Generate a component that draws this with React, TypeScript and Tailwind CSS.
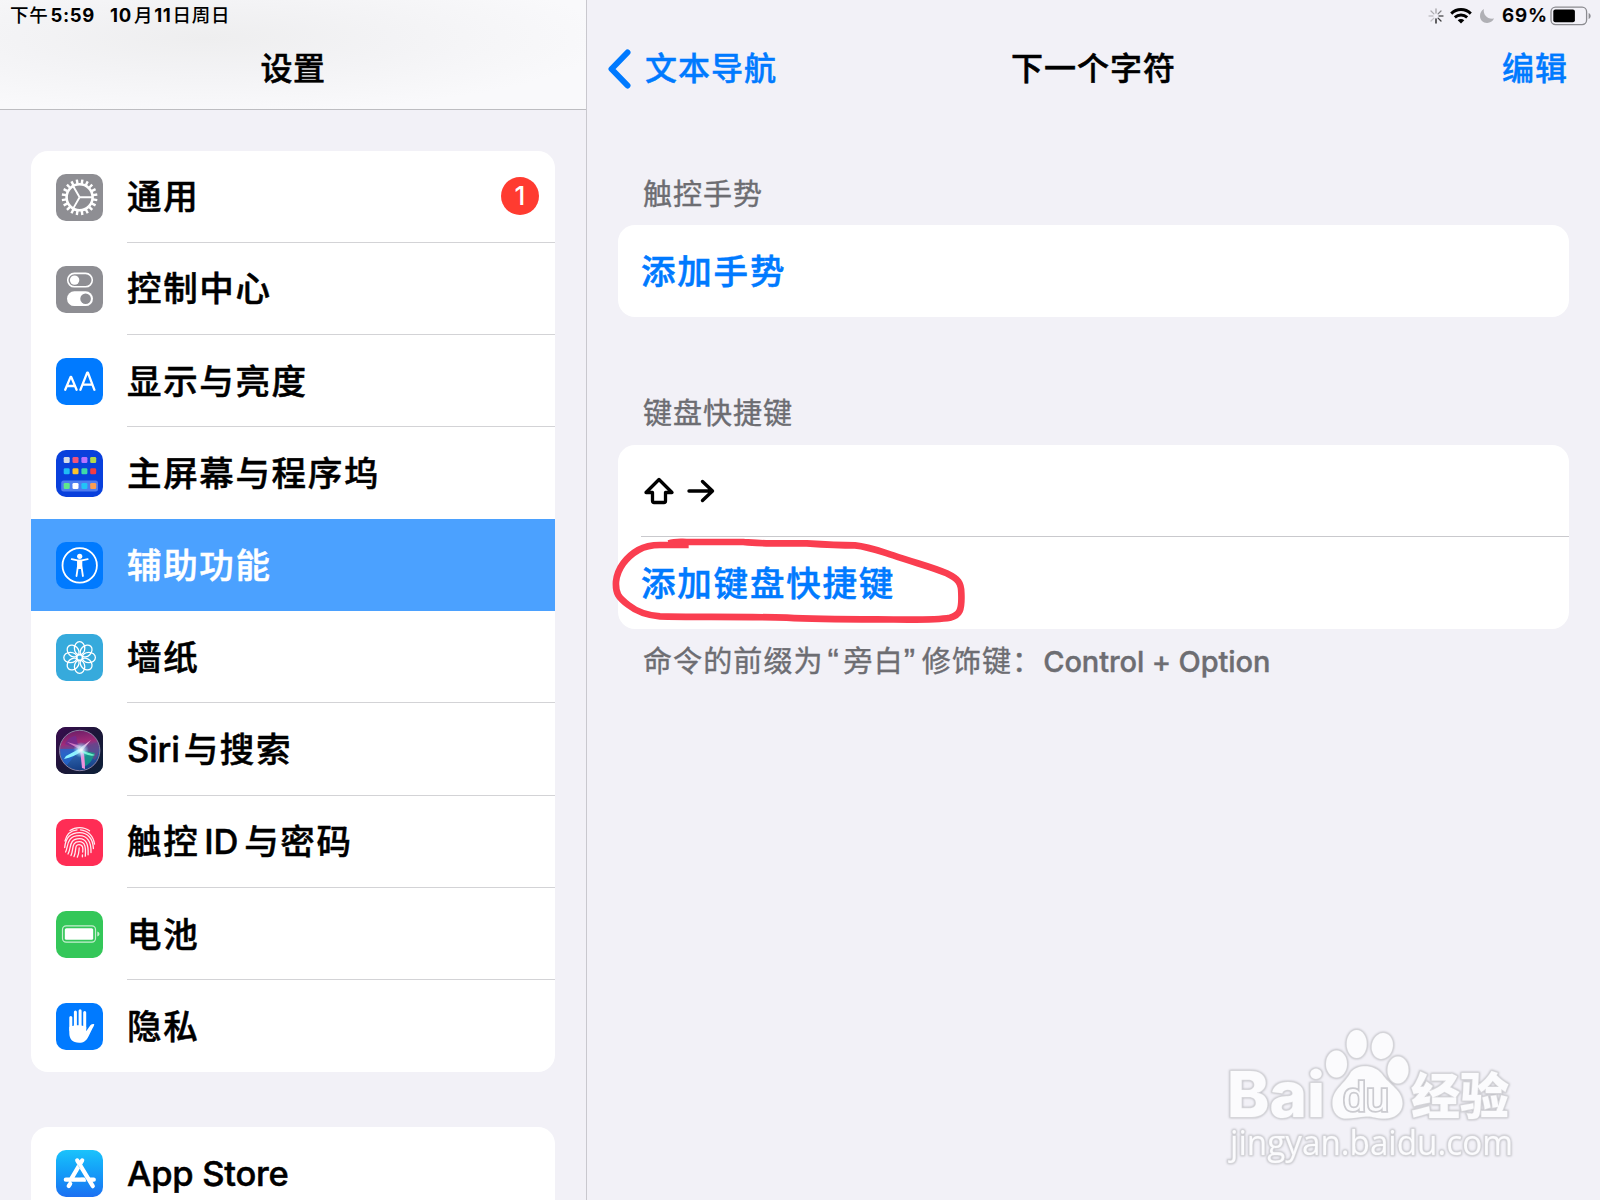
import type { ReactNode } from "react";

const GEAR_TEETH = Array.from({ length: 20 }, (_, i) => i * 18 + 9);
const PETALS = [0, 45, 90, 135, 180, 225, 270, 315];

const GRID_DOTS = [
  { x: 10.7, y: 10, color: "#d5dbe6" },
  { x: 19.5, y: 10, color: "#f2557a" },
  { x: 28.4, y: 10, color: "#b872ff" },
  { x: 37.2, y: 10, color: "#b3d94c" },
  { x: 10.7, y: 21.3, color: "#1fbcf5" },
  { x: 19.5, y: 21.3, color: "#fdc22b" },
  { x: 28.4, y: 21.3, color: "#3fd8a8" },
  { x: 37.2, y: 21.3, color: "#f23c43" },
  { x: 10.7, y: 36, color: "#5fe88a" },
  { x: 19.5, y: 36, color: "#ffffff" },
  { x: 28.4, y: 36, color: "#22c3f7" },
  { x: 37.2, y: 36, color: "#f99d52" },
];

function AppIcon({ className, children }: { className: string; children: ReactNode }) {
  return (
    <svg viewBox="0 0 47 47" className={`mt-px size-[47px] shrink-0 rounded-[10px] ${className}`}>
      {children}
    </svg>
  );
}

function GearIcon() {
  return (
    <AppIcon className="bg-[#8e8e93]">
      <g stroke="#fff" fill="none" transform="translate(23.6 23.3)">
        <circle r="13" strokeWidth="2.6" />
        {GEAR_TEETH.map((a) => (
          <path key={a} d="M13.5 0H17.9" strokeWidth="2.4" transform={`rotate(${a})`} />
        ))}
        <path d="M0 0H13M0 0L-6.5 -11.3M0 0L-6.5 11.3" strokeWidth="1.9" />
      </g>
    </AppIcon>
  );
}

function TogglesIcon() {
  return (
    <AppIcon className="bg-[#8e8e93]">
      <rect x="11.7" y="7.4" width="24.6" height="13.4" rx="6.7" fill="none" stroke="#fff" strokeWidth="1.6" />
      <circle cx="18.6" cy="14.1" r="4.7" fill="#fff" />
      <rect x="11" y="25.3" width="26" height="14.8" rx="7.4" fill="#fff" />
      <circle cx="29.6" cy="32.7" r="5.3" fill="#8e8e93" />
    </AppIcon>
  );
}

function DisplayIcon() {
  return (
    <AppIcon className="bg-[#007aff]">
      <g fill="none" stroke="#fff" strokeWidth="2.3" strokeLinecap="round" strokeLinejoin="round">
        <path d="M9.2 31.8L14.6 18.9H15.2L20.6 31.8M11.1 28H18.7" />
        <path d="M24.4 31.8L31.2 14.7H31.9L38.4 31.8M26.6 26.6H36.4" />
      </g>
    </AppIcon>
  );
}

function HomeScreenIcon() {
  return (
    <AppIcon className="bg-[#0940dc]">
      <rect x="5.2" y="30.6" width="36.8" height="10.8" rx="2.5" fill="#4d7cf0" />
      {GRID_DOTS.map((d) => (
        <rect key={`${d.x}-${d.y}`} x={d.x - 3} y={d.y - 3} width="6" height="6" rx="1.3" fill={d.color} />
      ))}
    </AppIcon>
  );
}

function AccessibilityIcon() {
  return (
    <AppIcon className="bg-[#007aff]">
      <circle cx="23.7" cy="23.4" r="17.2" fill="none" stroke="#fff" strokeWidth="1.8" />
      <circle cx="23.7" cy="14.3" r="2.6" fill="#fff" />
      <path
        d="M15.7 17.2L21.5 18.4H25.9L31.7 17.2M22 18.8V24L20.5 34M25.4 18.8V24L26.9 34"
        fill="none"
        stroke="#fff"
        strokeWidth="1.8"
        strokeLinecap="round"
        strokeLinejoin="round"
      />
      <path d="M21.5 18H25.9V24.5L25.3 27H22.1L21.5 24.5Z" fill="#fff" />
    </AppIcon>
  );
}

function WallpaperIcon() {
  return (
    <AppIcon className="bg-[#36aadc]">
      <g fill="none" stroke="#fff" strokeWidth="1.3" transform="translate(23.6 23.5)">
        {PETALS.map((a) => (
          <ellipse key={a} cy="-9.2" rx="5.2" ry="6.6" transform={`rotate(${a})`} />
        ))}
        <circle r="3" />
      </g>
    </AppIcon>
  );
}

function SiriIcon() {
  return (
    <AppIcon className="bg-[#1d1536]">
      <defs>
        <linearGradient id="siriBg" x1="0" y1="0" x2="1" y2="1">
          <stop offset="0" stopColor="#3a0c50" />
          <stop offset="0.5" stopColor="#1c1638" />
          <stop offset="1" stopColor="#0b2138" />
        </linearGradient>
        <linearGradient id="siriOrb" x1="0.4" y1="0" x2="0.55" y2="1">
          <stop offset="0" stopColor="#6d1f68" />
          <stop offset="0.3" stopColor="#a02a78" />
          <stop offset="0.55" stopColor="#2f66b0" />
          <stop offset="1" stopColor="#133c82" />
        </linearGradient>
        <radialGradient id="siriGlow">
          <stop offset="0" stopColor="#fff" />
          <stop offset="0.4" stopColor="#c8f4ff" stopOpacity="0.7" />
          <stop offset="1" stopColor="#7ad8ff" stopOpacity="0" />
        </radialGradient>
      </defs>
      <rect width="47" height="47" fill="url(#siriBg)" />
      <circle cx="23.7" cy="23.5" r="20.2" fill="url(#siriOrb)" />
      <path d="M24 22L4 22Q5 35 11 38Z" fill="#2465d0" opacity="0.75" />
      <path d="M24 22L42 15Q45 25 39 33Z" fill="#6a4488" opacity="0.75" />
      <path d="M24 23L39 26Q35 38 27 40Z" fill="#10a984" opacity="0.7" />
      <path d="M23 22L9 17Q13 9 20 9Z" fill="#702c91" opacity="0.8" />
      <path d="M23 22L10 29L8 32Q18 30 26 24Z" fill="#8df3ff" />
      <path d="M24 22L26 41L29 42Q29 30 27 22Z" fill="#ed91dc" />
      <path d="M24 21L35 13L25 25Z" fill="#ffc2e7" opacity="0.85" />
      <path d="M23 22L11 15L25 19Z" fill="#e489ce" opacity="0.8" />
      <path d="M24 23L39 28Q35 30 27 26Z" fill="#6cf5cc" />
      <circle cx="25" cy="23" r="8" fill="url(#siriGlow)" />
      <circle cx="23.7" cy="23.5" r="20.2" fill="none" stroke="#8a82a4" strokeWidth="1" />
    </AppIcon>
  );
}

function TouchIdIcon() {
  return (
    <AppIcon className="bg-[#ff2d55]">
      <g fill="none" stroke="#ffeaf0" strokeWidth="1.3" strokeLinecap="round">
        <path d="M14 11.5C19.5 7.5 28 7.5 33.5 11.8" />
        <path d="M9 22C10.5 15 15.5 11.4 21 10.8M24.5 10.8C32 11.5 37.3 17 38.5 25" />
        <path d="M8.7 28.5C9.5 20 13.5 13.7 23.5 13.7C32 13.7 37 20 37.4 29.5" />
        <path d="M9.6 33C12.5 27.5 10 16.7 23.5 16.7C31.5 16.7 35.3 23 35 33.5" />
        <path d="M12 35C15.5 29 12.5 19.7 23.5 19.7C30.5 19.7 32.6 26 32.1 35.8" />
        <path d="M15 36.6C18 30 15 22.7 23.3 22.7C29.5 22.7 29.9 29 29.3 37.2" />
        <path d="M18 37.6C21 31 18 25.7 23 25.7C27.2 25.7 27.1 29.5 26.7 33" />
        <path d="M21.3 38.1C23.2 34.5 22.8 32 23.2 29" />
        <path d="M26.4 36V37.8" />
      </g>
    </AppIcon>
  );
}

function BatteryIcon() {
  return (
    <AppIcon className="bg-[#34c759]">
      <rect x="6.5" y="14.9" width="33" height="16.2" rx="3.6" fill="none" stroke="#c5efcf" strokeWidth="1.2" />
      <rect x="8.8" y="17.2" width="28.4" height="11.6" rx="1.6" fill="#fff" />
      <path d="M41.3 20.5V25.5C44.2 24.7 44.2 21.3 41.3 20.5Z" fill="#c5efcf" />
    </AppIcon>
  );
}

function PrivacyIcon() {
  return (
    <AppIcon className="bg-[#007aff]">
      <g stroke="#fff" strokeWidth="3" strokeLinecap="round">
        <path d="M14.8 14.4V27M19.4 8.9V26M24.1 7.8V26M28.7 9.6V26" />
      </g>
      <path
        d="M13.3 24C18 21.5 26 21.5 30.2 24L30.2 28.2L33.5 23.4C35.2 21 37 20.6 38.3 21.4C38 22.7 37.2 23.8 36.4 25.4L32.6 33.2C30.5 37.6 27.5 39.8 23.2 39.8C16.5 39.8 13.3 36 13.3 30Z"
        fill="#fff"
      />
    </AppIcon>
  );
}

function AppStoreIcon() {
  return (
    <AppIcon className="bg-linear-to-b from-[#1cc3fb] to-[#1d70f2]">
      <g stroke="#fff" strokeWidth="4.2" strokeLinecap="round" fill="none">
        <path d="M26.2 10.4L15.4 28.6M21.2 10.4L36.8 36.2M9.8 29.7H27.4M34.2 29.7H37.8M14.2 33.8L12.7 36" />
      </g>
      <path d="M21.5 14.5L24 18.6" stroke="#a5dcfb" strokeWidth="0.8" />
      <path d="M24.5 27.7L29 27.7L30.3 31.6L28 31.7" fill="#fff" />
    </AppIcon>
  );
}

type MenuItem = {
  label: ReactNode;
  icon: ReactNode;
  badge?: number;
  selected?: boolean;
  last?: boolean;
};

const menu: MenuItem[] = [
  { label: "通用", icon: <GearIcon />, badge: 1 },
  { label: "控制中心", icon: <TogglesIcon /> },
  { label: "显示与亮度", icon: <DisplayIcon /> },
  { label: "主屏幕与程序坞", icon: <HomeScreenIcon />, last: true },
  { label: "辅助功能", icon: <AccessibilityIcon />, selected: true },
  { label: "墙纸", icon: <WallpaperIcon /> },
  {
    label: (
      <>
        <span className="mr-[4px] tracking-[-0.2px]">Siri</span>与搜索
      </>
    ),
    icon: <SiriIcon />,
  },
  {
    label: (
      <>
        触控<span className="mr-[6px] ml-[5px] tracking-[-0.2px]">ID</span>与密码
      </>
    ),
    icon: <TouchIdIcon />,
  },
  { label: "电池", icon: <BatteryIcon /> },
  { label: "隐私", icon: <PrivacyIcon />, last: true },
];

function MenuRow({ label, icon, badge, selected, last }: MenuItem) {
  return (
    <li className={`flex h-[92.16px] items-center pl-[25px] ${selected ? "bg-[#4ba1ff] text-white" : "text-black"}`}>
      {icon}
      <div
        className={`ml-6 flex h-full flex-1 items-center justify-between border-b-[1.5px] pr-4 ${
          selected || last ? "border-transparent" : "border-[#d3d3d6]"
        }`}
      >
        <span className="pt-[3px] text-[34.5px] leading-none font-medium tracking-[1.65px] [-webkit-text-stroke:0.5px]">
          {label}
        </span>
        {badge && (
          <span className="mb-px flex size-[38px] items-center justify-center rounded-full bg-[#ff3b30] text-[26px] font-medium text-white">
            {badge}
          </span>
        )}
      </div>
    </li>
  );
}

function StatusIcons() {
  return (
    <div className="flex h-[31px] items-center justify-end pr-[8px]">
      <svg viewBox="0 0 16 16" className="size-4" stroke="#111" strokeWidth="1.3" strokeLinecap="round">
        <path d="M8 11V15" />
        <path d="M10.1 10.1L13 13" opacity="0.8" />
        <path d="M11 8H15" opacity="0.65" />
        <path d="M10.1 5.9L13 3" opacity="0.5" />
        <path d="M8 5V1" opacity="0.35" />
        <path d="M5.9 5.9L3 3" opacity="0.3" />
        <path d="M5 8H1" opacity="0.2" />
        <path d="M5.9 10.1L3 13" opacity="0.2" />
      </svg>
      <svg viewBox="0 0 22 16" className="ml-1.5 h-4 w-[22px]" fill="none" stroke="#000" strokeWidth="2.9">
        <path d="M1.2 5.6C6.7 0.2 15.3 0.2 20.8 5.6" />
        <path d="M4.8 9.4C8.4 6.1 13.6 6.1 17.2 9.4" />
        <path d="M11 15.6L7.7 12.3C9.6 10.7 12.4 10.7 14.3 12.3Z" fill="#000" stroke="none" />
      </svg>
      <svg viewBox="0 0 16 16" className="ml-[7px] size-4">
        <path d="M4.8 1C4 6.8 8.5 11.7 15 10.6C13.6 13.5 11 15.1 8 15C4 14.9 1 12 1 8C1 5 2.4 2.5 4.8 1Z" fill="#b0b0b5" />
      </svg>
      <span className="ml-[7px] w-[45px] text-[19px] leading-none font-semibold tracking-[0.8px] whitespace-nowrap [-webkit-text-stroke:0.2px]">
        69%
      </span>
      <svg viewBox="0 0 42 20" className="ml-[3px] h-5 w-[42px]">
        <rect x="1" y="1.2" width="35.6" height="17.4" rx="4.5" fill="none" stroke="#8b8b90" strokeWidth="1.3" />
        <rect x="3.3" y="3.6" width="21.6" height="12.6" rx="2" fill="#000" />
        <path d="M38.6 7V13C41.3 11.8 41.3 8.2 38.6 7Z" fill="#8b8b90" />
      </svg>
    </div>
  );
}

function RedCircle() {
  return (
    <svg viewBox="0 450 1140 300" className="absolute top-[530px] left-[600px] h-[100px] w-[380px]">
      <path
        d="M206 490C225 484 240 486 260 486H430C470 489 490 491 520 490H620C680 494 720 496 765 496C805 500 830 510 880 526C950 550 1000 562 1040 580C1075 597 1084 608 1084 640C1086 690 1080 705 1050 713C1000 722 900 718 830 718C720 718 610 716 560 713C420 709 260 712 180 709C140 706 110 695 85 675C55 652 46 640 48 605C52 565 80 530 115 510C140 496 160 495 180 495H266"
        fill="none"
        stroke="#fa3e50"
        strokeWidth="20"
        strokeLinejoin="round"
      />
    </svg>
  );
}

function Watermark() {
  return (
    <svg
      viewBox="0 0 340 180"
      className="absolute top-[1010px] left-[1200px] h-[180px] w-[340px] drop-shadow-[0_0_1px_#b0b0b6]"
      fill="#fbfbfd"
      stroke="#d6d6da"
      strokeWidth="2"
      style={{ paintOrder: "stroke" }}
    >
      <text x="27" y="107" fontSize="63" fontWeight="800" fontFamily="Inter, sans-serif" textLength="98" lengthAdjust="spacingAndGlyphs">
        Bai
      </text>
      <ellipse cx="136.5" cy="54" rx="10.5" ry="13.5" />
      <ellipse cx="156.7" cy="34" rx="10" ry="14" />
      <ellipse cx="182.3" cy="36" rx="10.5" ry="13" transform="rotate(12 182.3 36)" />
      <ellipse cx="198" cy="60" rx="10.5" ry="13.5" />
      <path d="M151 62C158 54 174 54 182 64C189 75 203 80 202.5 94C202 104 193 109 184 108.5C176 108.5 172 106 166 106.5C158 107 151 109 144 108.5C136 107 132 100 132.5 92C133 79 145 74 151 62Z" />
      <text x="143" y="101" fontSize="41" fontFamily="Liberation Sans, sans-serif" strokeWidth="3.5" stroke="#cbcbd0" textLength="46" lengthAdjust="spacingAndGlyphs">
        du
      </text>
      <text x="211" y="104" fontSize="49" fontWeight="900" fontFamily="Noto Sans CJK SC, sans-serif" textLength="98" lengthAdjust="spacingAndGlyphs">
        经验
      </text>
      <text x="30" y="145" fontSize="35" fontFamily="Open Sans, sans-serif" textLength="283" lengthAdjust="spacingAndGlyphs">
        jingyan.baidu.com
      </text>
    </svg>
  );
}

export default function App() {
  return (
    <div className="relative flex h-[1200px] w-[1600px] overflow-hidden bg-[#f2f1f7] font-[Inter,'Noto_Sans_CJK_SC',sans-serif] text-black">
      <aside className="w-[587px] shrink-0 border-r-[1.5px] border-[#c9c8ce]">
        <header className="h-[110px] border-b-[1.5px] border-[#bdbdc1] bg-[radial-gradient(ellipse_at_35%_35%,#eeeeef_0%,#f3f3f5_35%,#f9f9fb_75%)]">
          <div className="flex h-[31px] items-center pl-[10px] text-[18.5px] leading-none font-medium tracking-[0.7px]">
            <span>下午</span>
            <span className="ml-[2px] font-bold">5:59</span>
            <span className="ml-[15px] font-bold">10</span>
            <span className="ml-[2px]">月</span>
            <span className="ml-px font-bold">11</span>
            <span className="ml-px">日周日</span>
          </div>
          <h1 className="pt-[21px] text-center text-[32px] leading-[34px] font-medium tracking-[0.6px] [-webkit-text-stroke:0.5px]">
            设置
          </h1>
        </header>

        <ul className="mx-[31px] mt-[40.5px] overflow-hidden rounded-[17px] bg-white">
          {menu.map((item, i) => (
            <MenuRow key={i} {...item} />
          ))}
        </ul>
        <ul className="mx-[31px] mt-[55px] overflow-hidden rounded-[17px] bg-white">
          <MenuRow label={<span className="tracking-[-0.25px]">App Store</span>} icon={<AppStoreIcon />} />
        </ul>
      </aside>

      <main className="flex-1">
        <StatusIcons />
        <div className="grid h-[75px] grid-cols-3 items-center pr-[32px] pl-[20px] text-[32px] leading-none font-medium tracking-[1px] [-webkit-text-stroke:0.4px]">
          <button className="flex items-center gap-[13px] text-[#007aff]">
            <svg viewBox="0 0 25 40" className="h-10 w-[25px]" fill="none" stroke="currentColor" strokeWidth="6" strokeLinecap="round" strokeLinejoin="round">
              <path d="M20.5 3.5L4.5 20L20.5 36.5" />
            </svg>
            文本导航
          </button>
          <h2 className="pl-[12px] text-center [-webkit-text-stroke:0.5px]">下一个字符</h2>
          <button className="text-right text-[#007aff]">编辑</button>
        </div>

        <section className="mx-[31px] pt-[74px]">
          <h3 className="pl-[25px] text-[29px] leading-[30px] tracking-[1px] text-[#6d6d72] [-webkit-text-stroke:0.4px]">触控手势</h3>
          <div className="mt-[15px] flex h-[92px] items-center rounded-[17px] bg-white pt-[2px] pl-[23px]">
            <button className="text-[34.5px] font-medium tracking-[1.8px] text-[#007aff] [-webkit-text-stroke:0.5px]">添加手势</button>
          </div>
        </section>

        <section className="mx-[31px] pt-[82px]">
          <h3 className="pl-[25px] text-[29px] leading-[30px] tracking-[1px] text-[#6d6d72] [-webkit-text-stroke:0.4px]">键盘快捷键</h3>
          <div className="mt-4 rounded-[17px] bg-white pl-[23px]">
            <div className="flex h-[92px] items-center gap-3 border-b-[1.5px] border-[#c9c9cd]">
              <svg viewBox="0 0 32 28" className="ml-[2px] h-7 w-8" fill="none" stroke="#000" strokeWidth="3.3" strokeLinejoin="round">
                <path d="M16 2.5L29 15.5H22.5V24Q22.5 25.5 21 25.5H11Q9.5 25.5 9.5 24V15.5H3Z" />
              </svg>
              <svg viewBox="0 0 28 24" className="h-6 w-7" fill="none" stroke="#000" strokeWidth="3.4" strokeLinecap="round" strokeLinejoin="round">
                <path d="M2 12H25M15.5 2.5L25.5 12L15.5 21.5" />
              </svg>
            </div>
            <div className="flex h-[91.5px] items-center pt-[2px]">
              <button className="text-[34.5px] font-medium tracking-[1.8px] text-[#007aff] [-webkit-text-stroke:0.5px]">添加键盘快捷键</button>
            </div>
          </div>
          <p className="mt-[14.5px] pl-[25px] text-[29px] leading-[30px] tracking-[1.1px] whitespace-nowrap text-[#6d6d72] [-webkit-text-stroke:0.4px]">
            命令的前缀为
            <span className="ml-[4px] inline-block w-[16px] font-['Liberation_Sans'] text-[34px] leading-none">“</span>
            旁白
            <span className="inline-block w-[18px] font-['Liberation_Sans'] text-[34px] leading-none">”</span>
            修饰键：
            <span className="ml-px font-medium tracking-[-0.1px]">Control + Option</span>
          </p>
        </section>
      </main>

      <RedCircle />
      <Watermark />
    </div>
  );
}
